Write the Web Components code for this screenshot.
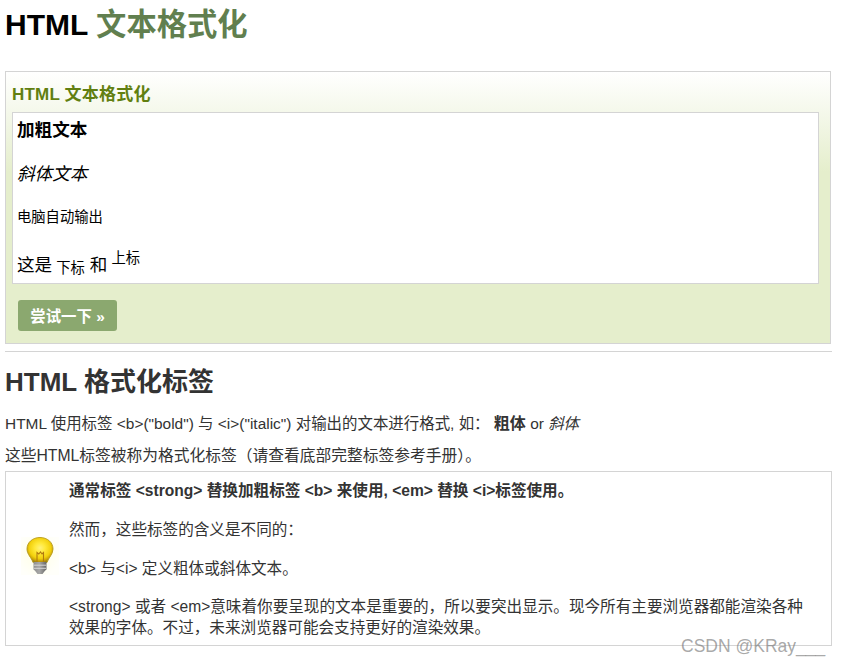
<!DOCTYPE html>
<html lang="zh"><head><meta charset="utf-8">
<style>
html,body{margin:0;padding:0;background:#fff}
body{font-family:"Liberation Sans","Noto Sans CJK SC",sans-serif;width:841px;height:666px;overflow:hidden;position:relative}
</style></head><body>
<template id="t-page"><style>
:host{display:block;padding:0 9px 0 5px;color:#333;font-size:15.45px}
h1{margin:0;padding-top:6px;font-size:30px;line-height:38px;color:#000;font-weight:700}
h1 span{color:#617f4f;font-size:30.3px}
.sp{height:27px}
hr{border:0;height:1px;background:#d4d4d4;margin:7px 0 0;width:827px}
h2{margin:12px 0 0;font-size:26px;line-height:36px;color:#333;font-weight:700}
p{margin:0;line-height:20px}
.a{margin-top:14px}.b{margin-top:12px;font-size:15.75px}
p b{color:#333;font-size:16px}
i{font-style:italic}
</style>
<h1>HTML <span>文本格式化</span></h1><div class="sp"></div>
<x-example></x-example>
<hr>
<h2>HTML 格式化标签</h2>
<p class="a">HTML 使用标签 &lt;b&gt;("bold") 与 &lt;i&gt;("italic") 对输出的文本进行格式, 如： <b>粗体</b> or <i>斜体</i></p>
<p class="b">这些HTML标签被称为格式化标签（请查看底部完整标签参考手册）。</p>
<x-tip><b>通常标签 &lt;strong&gt; 替换加粗标签 &lt;b&gt; 来使用, &lt;em&gt; 替换 &lt;i&gt;标签使用。</b></x-tip>
</template>
<template id="t-example"><style>
:host{display:block;width:824px;height:271px;border:1px solid #d4d4d4;background:linear-gradient(#fff 0,#e5eecc 100px,#e5eecc 100%);box-sizing:content-box;padding:0}
.in{padding:0 11px 0 6px}
h3{margin:0;padding-top:13px;font-size:17px;line-height:20px;color:#617f10;font-weight:700;letter-spacing:.2px;box-sizing:content-box;height:27px}
.box{height:170px;border:1px solid #d4d4d4;background:#fff;padding:0 4px;box-sizing:content-box;width:797px;color:#000;overflow:hidden}
.box div{display:flex;align-items:center}
.l1{height:34px;font-size:17.6px;font-weight:700;margin-top:-2px}
.l2{height:44px;font-size:17.6px;font-style:italic;margin-top:5px}
.l3{height:42px;font-size:14.3px}
.l4{height:50px;font-size:17.6px;margin-top:2px}
sub,sup{font-size:14.3px;line-height:0}
sub{position:relative;top:5px;margin:0 5px 0 4px}sup{position:relative;top:-5px;margin:0 0 0 4px}
a{display:flex;align-items:center;justify-content:center;margin:16px 0 0 6px;width:99px;height:31px;padding-bottom:2px;box-sizing:border-box;background:#8ba86f;border-radius:3px;color:#fff;font-size:15.4px;font-weight:700;text-decoration:none}
</style>
<div class="in"><h3>HTML 文本格式化</h3>
<div class="box"><div class="l1">加粗文本</div><div class="l2">斜体文本</div><div class="l3">电脑自动输出</div><div class="l4">这是<sub>下标</sub>和<sup>上标</sup></div></div>
<a href="#">尝试一下 »</a></div>
</template>
<template id="t-tip"><style>
:host{display:block;box-sizing:border-box;width:827px;height:175px;margin-top:5px;border:1px solid #d4d4d4;position:relative;padding:0 22px 0 63px;color:#333;font-size:15.6px}
p{margin:0;line-height:21px}
p+p{margin-top:18px}
p.last{line-height:20.5px}
.first{padding-top:8px}
svg{position:absolute;left:15px;top:65px}
</style>
<svg width="38" height="38" viewBox="0 0 38 38" aria-hidden="true"><defs>
<radialGradient id="g" cx=".5" cy=".42" r=".58"><stop offset="0" stop-color="#fff27a"/><stop offset=".35" stop-color="#ffe838"/><stop offset=".72" stop-color="#f2d00c"/><stop offset=".9" stop-color="#c9a208"/><stop offset="1" stop-color="#a08410"/></radialGradient>
<linearGradient id="m" x1="0" x2="1"><stop offset="0" stop-color="#8f8f8f"/><stop offset=".45" stop-color="#a8a8a8"/><stop offset="1" stop-color="#666"/></linearGradient>
<radialGradient id="h" cx=".45" cy=".45" r=".6"><stop offset="0" stop-color="#ffffe4"/><stop offset="1" stop-color="#fffffa"/></radialGradient></defs>
<rect width="38" height="38" fill="url(#h)"/>
<path d="M19 .5C11.500.5 6 5.500 6 12c0 5.500 4.500 8.500 6 13.500h14C27.500 20.500 32 17.500 32 12 32 5.500 26.500.5 19 .5z" fill="url(#g)" stroke="#b89a18" stroke-width=".9"/>
<path d="M16 25v-9.500l1.800 1.500 1.700-2 1.500 2 1.500-1.500V25" fill="none" stroke="#b07a10" stroke-width="1.100"/>
<path d="M12.500 25h13v7.500l-1.500 1.200-2.500 3.300h-5l-2.500-3.300-1.500-1.200z" fill="url(#m)"/>
<path d="M12.800 28.200h12.400M13 31.300h12" stroke="#d6d6d6" stroke-width="1"/>
</svg>
<div class="first"><p><slot></slot></p></div>
<p style="margin-top:18px">然而，这些标签的含义是不同的：</p>
<p>&lt;b&gt; 与&lt;i&gt; 定义粗体或斜体文本。</p>
<p class="last">&lt;strong&gt; 或者 &lt;em&gt;意味着你要呈现的文本是重要的，所以要突出显示。现今所有主要浏览器都能渲染各种效果的字体。不过，未来浏览器可能会支持更好的渲染效果。</p>
</template>
<template id="t-wm"><style>
:host{position:absolute;left:681px;top:636px;font-size:17.5px;line-height:21px;color:rgba(120,120,120,.65);white-space:nowrap}
</style>CSDN @KRay___</template>
<x-page></x-page><x-watermark></x-watermark>
<script>
const reg=(n,t)=>customElements.define(n,class extends HTMLElement{constructor(){super();this.attachShadow({mode:'open'}).appendChild(document.getElementById(t).content.cloneNode(true))}});
reg('x-example','t-example');reg('x-tip','t-tip');reg('x-watermark','t-wm');reg('x-page','t-page');
</script></body></html>
